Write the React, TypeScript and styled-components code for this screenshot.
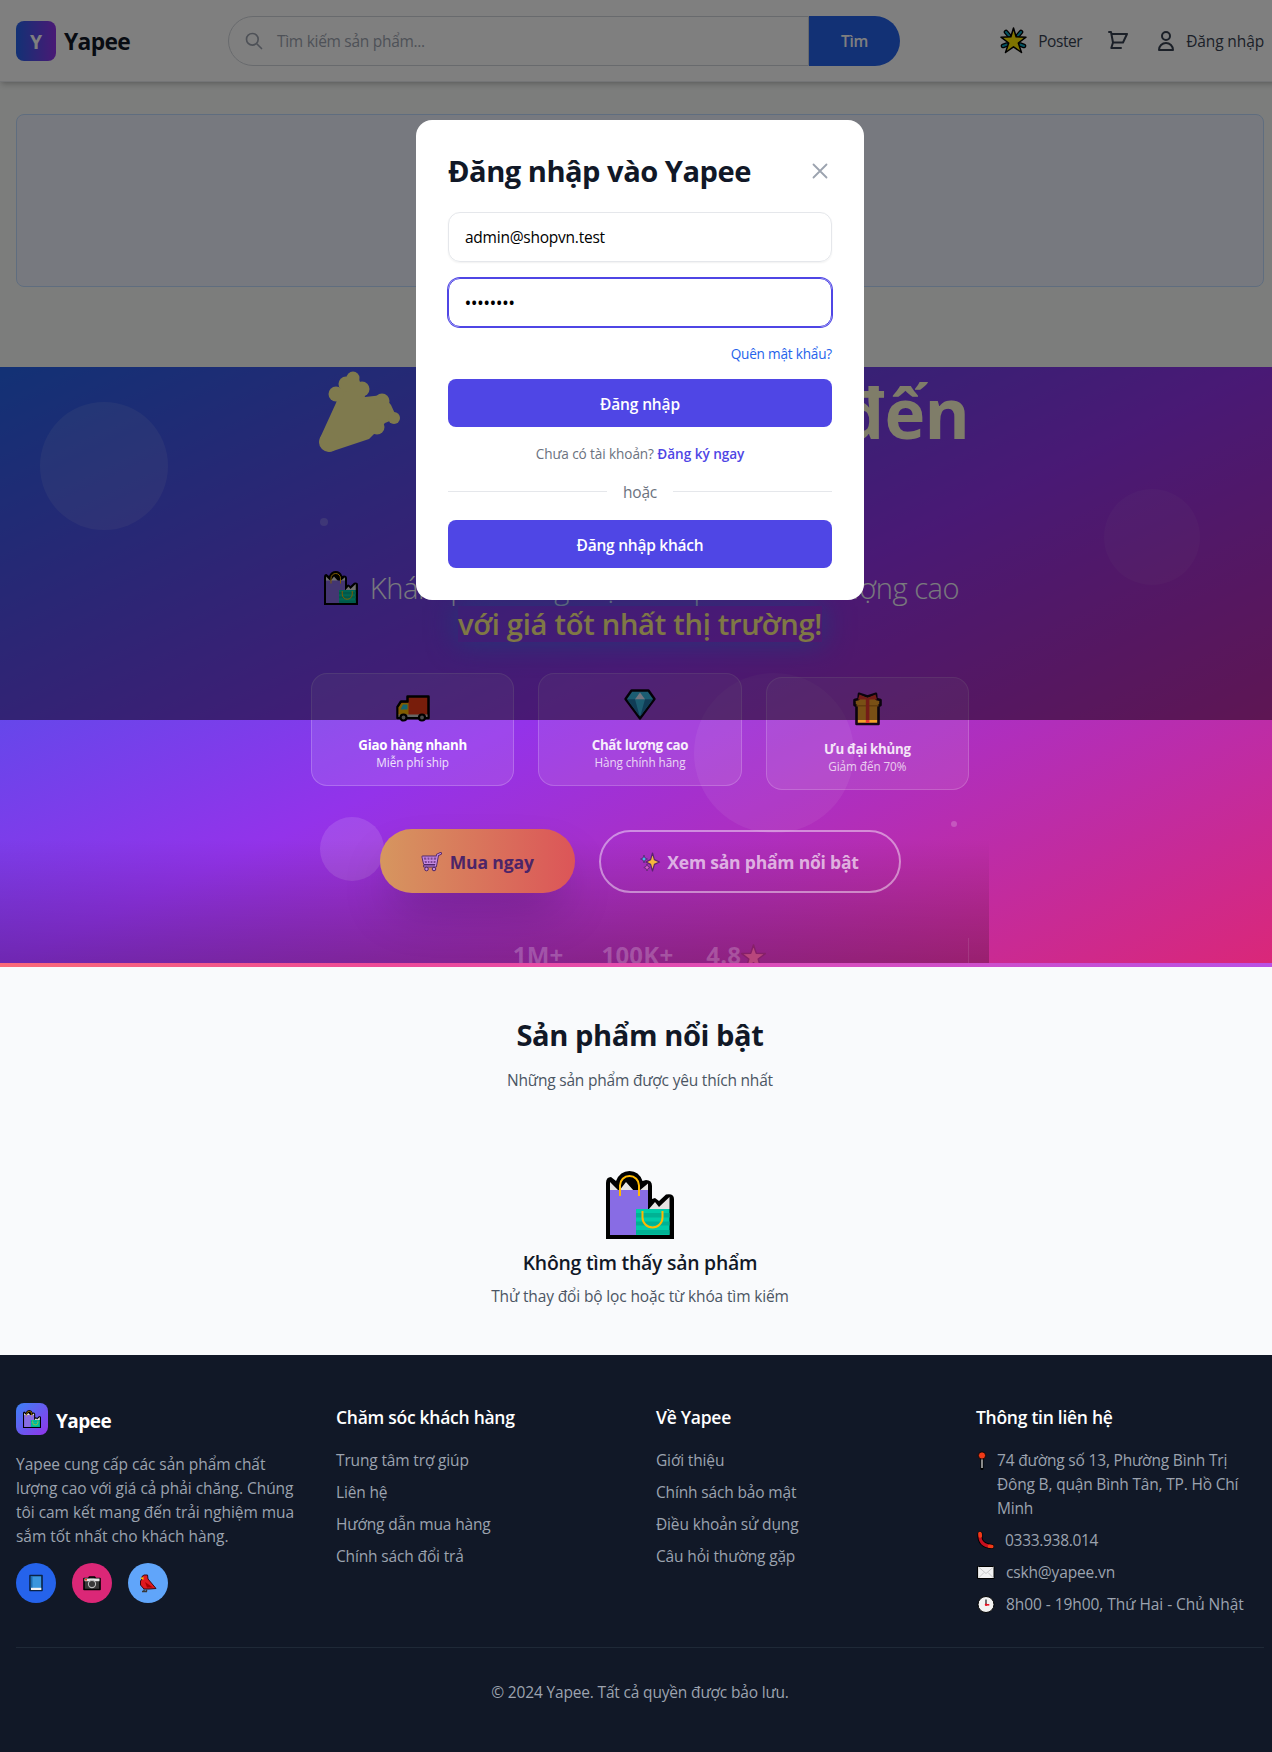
import React from "react";
import styled, { createGlobalStyle, css } from "styled-components";

const GlobalStyle = createGlobalStyle`
  *, *::before, *::after { box-sizing: border-box; }
  body { margin: 0; background: #111827; font-family: "Open Sans", "Noto Sans", sans-serif; overflow: hidden; }
  h1, h2, h3, h4, p, ul { margin: 0; padding: 0; }
  ul { list-style: none; }
  svg { display: block; flex: none; overflow: visible; }
  button { border: 0; padding: 0; background: none; font-family: inherit; cursor: pointer; }
  a { color: inherit; text-decoration: none; }
`;

const type = (size: number, line: number, weight = 400, spacing = 0) => css`
  font-size: ${size}px;
  line-height: ${line}px;
  font-weight: ${weight};
  letter-spacing: ${spacing}px;
  white-space: nowrap;
`;

const Viewport = styled.div`
  position: relative;
  height: 1752px;
  overflow: hidden;
`;
const Page = styled.div`
  position: relative;
  width: 1280px;
  background: #f9fafc;
`;

/* ---------- header ---------- */
const Header = styled.header`
  position: relative;
  z-index: 1;
  display: flex;
  align-items: center;
  height: 82px;
  padding: 0 16px;
  background: #fff;
  border-bottom: 1px solid #e9ebef;
  box-shadow: 0 4px 6px -1px rgba(0, 0, 0, 0.16), 0 2px 4px -2px rgba(0, 0, 0, 0.14);
`;
const Brand = styled.a`
  display: flex;
  align-items: center;
  gap: 8px;
  width: 212px;
`;
const BrandMark = styled.span`
  display: grid;
  place-items: center;
  width: 40px;
  height: 40px;
  padding-top: 2px;
  border-radius: 8px;
  color: #fff;
  background: linear-gradient(to right, #2563eb, #9333ea);
  ${type(19.4, 38, 700)}
`;
const BrandName = styled.span`
  padding-top: 2px;
  color: #111827;
  ${type(22.8, 32, 700, -0.67)}
`;
const Search = styled.form`
  display: flex;
  width: 672px;
  height: 50px;
`;
const SearchField = styled.div`
  display: flex;
  align-items: center;
  gap: 13px;
  flex: 1;
  padding-left: 15px;
  border: 1px solid #d1d5db;
  border-radius: 25px 0 0 25px;
  color: #9ca3af;
  ${type(15.5, 24, 400, -0.29)}
`;
const SearchButton = styled.button`
  width: 91px;
  border-radius: 0 25px 25px 0;
  background: #2563eb;
  color: #fff;
  ${type(15.5, 24, 600, -0.25)}
`;
const HeaderNav = styled.nav`
  display: flex;
  align-items: center;
  justify-content: flex-end;
  gap: 24px;
  flex: 1;
  color: #374151;
`;
const NavItem = styled.a<{ $spacing?: number; $gap?: number }>`
  display: flex;
  align-items: center;
  gap: ${p => p.$gap ?? 8}px;
  ${p => type(15.5, 24, 400, p.$spacing ?? -0.12)}
`;

/* ---------- notice ---------- */
const NoticeArea = styled.div`
  padding: 32px 16px 80px;
  background: #f9fbf9;
`;
const Notice = styled.div`
  height: 173px;
  border: 1px solid #bfdbfe;
  border-radius: 8px;
  background: #eff3fe;
`;

/* ---------- hero ---------- */
const Hero = styled.section`
  position: relative;
  height: 600px;
  overflow: hidden;
  color: #fff;
  background: linear-gradient(to bottom right, #2563eb, #9333ea, #db2777);
`;
const Bubble = styled.span<{ $x: number; $y: number; $size: number; $alpha: number }>`
  position: absolute;
  left: ${p => p.$x}px;
  top: ${p => p.$y}px;
  width: ${p => p.$size}px;
  height: ${p => p.$size}px;
  border-radius: 50%;
  background: rgba(255, 255, 255, ${p => p.$alpha});
`;
const HeroFade = styled.div`
  position: absolute;
  left: 0;
  bottom: 0;
  width: 989px;
  height: 128px;
  background: linear-gradient(to top, rgba(0, 0, 0, 0.25), transparent);
`;
const HeroBar = styled.div`
  position: absolute;
  left: 0;
  right: 0;
  bottom: 0;
  height: 4px;
  background: linear-gradient(to right, #fb6a78, #ee4a98 30%, #e04db4 55%, #b951e6);
`;
const HeroContent = styled.div`
  position: relative;
  display: flex;
  flex-direction: column;
  align-items: center;
  width: 658px;
  margin: 0 auto;
`;
const HeroTitle = styled.h1`
  display: flex;
  justify-content: space-between;
  width: 658px;
  height: 203px;
  padding-left: 8px;
  color: #fffbd2;
  ${type(69, 90, 700, -0.8)}
`;
const TitleIcon = styled.span`
  padding-top: 4px;
`;
const HeroLead = styled.p`
  display: flex;
  align-items: center;
  gap: 12px;
  padding-left: 3px;
  color: #f2f4fb;
  ${type(29.1, 36, 300, -0.46)}
`;
const HeroOffer = styled.p`
  color: #fef08a;
  box-shadow: 0 0 30px rgba(59, 130, 246, 0.5), 0 0 24px rgba(40, 120, 246, 0.3);
  ${type(29.1, 36, 600, -0.27)}
`;
const Perks = styled.div`
  display: grid;
  grid-template-columns: repeat(3, 1fr);
  gap: 24px;
  width: 100%;
  margin-top: 31px;
`;
const Perk = styled.div<{ $shift?: number; $fade?: number }>`
  display: flex;
  flex-direction: column;
  align-items: center;
  height: 113px;
  padding-top: 16px;
  border: 1px solid rgba(255, 255, 255, 0.2);
  border-radius: 16px;
  background: rgba(255, 255, 255, 0.1);
  opacity: ${p => p.$fade ?? 1};
  transform: translateY(${p => p.$shift ?? 0}px);
`;
const PerkIcon = styled.div<{ $lift?: number }>`
  display: grid;
  place-items: center;
  height: 36px;
  margin-bottom: 9px;
  transform: translateY(${p => p.$lift ?? 0}px);
`;
const PerkTitle = styled.h3`
  ${type(13.3, 20, 700, -0.28)}
`;
const PerkText = styled.p`
  opacity: 0.85;
  ${type(11.7, 14, 400, -0.06)}
`;
const HeroActions = styled.div`
  display: flex;
  align-items: center;
  gap: 23.5px;
  margin-top: 43px;
`;
const BuyButton = styled.button`
  display: flex;
  align-items: center;
  justify-content: center;
  gap: 8px;
  width: 195.5px;
  height: 64px;
  padding-top: 1px;
  border-radius: 32px;
  color: #4c2468;
  background: linear-gradient(to right, #d6965f, #dc5558);
  box-shadow: 0 25px 50px -12px rgba(0, 0, 0, 0.25);
  ${type(17.5, 28, 700, -0.1)}
`;
const FeaturedButton = styled.button`
  display: flex;
  align-items: center;
  justify-content: center;
  gap: 7px;
  width: 302px;
  height: 63px;
  padding-top: 1px;
  border: 2px solid rgba(255, 255, 255, 0.45);
  border-radius: 32px;
  color: rgba(255, 255, 255, 0.65);
  ${type(17.5, 28, 700, -0.2)}
`;
const Stats = styled.div`
  display: flex;
  justify-content: center;
  width: 100%;
  height: 60px;
  margin-top: 45px;
  border-right: 1px solid rgba(255, 255, 255, 0.1);
  color: rgba(255, 255, 255, 0.22);
`;
const Stat = styled.span<{ $gap: number }>`
  display: flex;
  align-items: flex-start;
  margin-right: ${p => p.$gap}px;
  padding-top: 1px;
  ${type(24, 32, 700, 0.2)}
`;
const StatStar = styled.span`
  padding-top: 5px;
`;

/* ---------- products ---------- */
const Products = styled.section`
  display: flex;
  flex-direction: column;
  align-items: center;
  height: 388px;
  padding-top: 49px;
`;
const SectionTitle = styled.h2`
  padding-top: 1px;
  color: #111827;
  ${type(29.1, 36, 700, -0.42)}
`;
const SectionText = styled.p`
  margin-top: 15px;
  color: #4b5563;
  ${type(15.5, 24, 400, -0.2)}
`;
const Empty = styled.div`
  display: flex;
  flex-direction: column;
  align-items: center;
  padding-top: 79px;
`;
const EmptyTitle = styled.h3`
  margin-top: 10px;
  color: #111827;
  ${type(19.4, 28, 600, -0.24)}
`;
const EmptyText = styled.p`
  margin-top: 7px;
  color: #4b5563;
  ${type(15.5, 24, 400, -0.14)}
`;

/* ---------- footer ---------- */
const Footer = styled.footer`
  padding: 48px 16px;
  background: #111827;
  color: #9ca3af;
`;
const FooterGrid = styled.div`
  display: grid;
  grid-template-columns: repeat(4, 288px);
  gap: 32px;
`;
const FooterBrand = styled.div`
  display: flex;
  align-items: center;
  gap: 8px;
  margin-bottom: 17px;
`;
const FooterMark = styled.span`
  display: grid;
  place-items: center;
  width: 32px;
  height: 32px;
  border-radius: 8px;
  background: linear-gradient(to bottom right, #3b82f6, #9333ea);
`;
const FooterName = styled.span`
  padding-top: 4px;
  color: #fff;
  ${type(19, 28, 700, -0.55)}
`;
const FooterText = styled.p`
  ${type(15.5, 24, 400, -0.04)}
`;
const Socials = styled.div`
  display: flex;
  gap: 16px;
  margin-top: 15px;
`;
const Social = styled.a<{ $color: string }>`
  display: grid;
  place-items: center;
  width: 40px;
  height: 40px;
  border-radius: 50%;
  background: ${p => p.$color};
`;
const FooterTitle = styled.h4`
  margin-bottom: 17px;
  color: #fff;
  ${type(17.5, 28, 600, -0.27)}
`;
const FooterList = styled.ul`
  display: grid;
  gap: 8px;
  margin-bottom: -1px;
`;
const FooterItem = styled.li<{ $spacing?: number; $gap?: number }>`
  display: flex;
  gap: ${p => p.$gap ?? 0}px;
  ${p => type(15.5, 24, 400, p.$spacing ?? -0.15)}
`;
const ItemIcon = styled.span`
  display: flex;
  align-items: center;
  height: 24px;
`;
const Copyright = styled.p`
  margin-top: 32px;
  padding-top: 32px;
  padding-bottom: 20px;
  border-top: 1px solid #1f2937;
  text-align: center;
  ${type(15.5, 24, 400, -0.17)}
`;

/* ---------- login dialog ---------- */
const Backdrop = styled.div`
  position: absolute;
  inset: 0 0 auto 0;
  z-index: 2;
  display: flex;
  align-items: center;
  justify-content: center;
  height: 720px;
  background: rgba(0, 0, 0, 0.5);
`;
const Dialog = styled.div`
  display: flex;
  flex-direction: column;
  width: 448px;
  height: 480px;
  padding: 32px;
  border-radius: 16px;
  background: #fff;
`;
const DialogHead = styled.div`
  display: flex;
  align-items: center;
  justify-content: space-between;
  height: 36px;
  margin-bottom: 24px;
`;
const DialogTitle = styled.h2`
  padding-top: 2px;
  color: #111827;
  ${type(29.1, 36, 700, -0.49)}
`;
const CloseButton = styled.button`
  padding-top: 1px;
  color: #9ca3af;
`;
const Field = styled.div<{ $focused?: boolean }>`
  display: flex;
  align-items: center;
  height: 49.5px;
  margin-bottom: 16px;
  padding: ${p => (p.$focused ? 2 : 0)}px 16px 0;
  border: 1px solid ${p => (p.$focused ? "#4f46e5" : "#e5e7eb")};
  border-radius: 12px;
  box-shadow: ${p => (p.$focused ? "0 0 0 1px #4f46e5" : "0 1px 2px rgba(0, 0, 0, 0.06)")};
  color: #000;
  ${p => (p.$focused ? type(15.5, 24, 600, 0.42) : type(15.5, 24, 400, -0.24))}
`;
const Forgot = styled.a`
  align-self: flex-end;
  margin: 1px 0 15px;
  color: #2563eb;
  ${type(13.6, 20, 400, -0.2)}
`;
const Submit = styled.button<{ $spacing: number; $drop?: number }>`
  height: 48px;
  padding-top: ${p => p.$drop ?? 1}px;
  border-radius: 8px;
  background: #4f46e5;
  color: #fff;
  ${p => type(15.5, 24, 600, p.$spacing)}
`;
const Register = styled.p`
  margin: 17px 0 16px;
  color: #6b7280;
  text-align: center;
  ${type(13.6, 20, 400, -0.1)}
`;
const RegisterLink = styled.a`
  color: #4f46e5;
  font-weight: 600;
  letter-spacing: -0.04px;
`;
const Divider = styled.div`
  display: flex;
  align-items: center;
  gap: 16px;
  margin-bottom: 16px;
  color: #6b7280;
  ${type(15.5, 24, 400, -0.2)}

  &::before, &::after {
    content: "";
    flex: 1;
    height: 1px;
    margin-bottom: 1px;
    background: #e5e7eb;
  }
`;

/* ---------- drawings ---------- */
const outline = { stroke: "#000", strokeLinejoin: "round" as const, strokeLinecap: "round" as const };

const BagsIcon = ({ size }: { size: number }) => (
  <svg width={size} height={size} viewBox="0 0 68 68">
    <path d="M0 68V12Q0 6 5 6L10 10Q14 0 23.500 0Q33 0 36.500 10L40 9Q46 9 46 15V28L49 27L53 30L60 23.500Q68 22 68 28V68Z" fill="#000" />
    <path d="M4 20V11L13 20L20 11L28 20ZM33 20L42 12.500V20Z" fill="#e5e3e3" />
    <path d="M4 19H42V38H30V64H4Z" fill="#886ce4" />
    <path d="M43 38L49 31L53 36L63.500 26V38Z" fill="#e5e3e3" />
    <path d="M30 38H63.500V64H30Z" fill="#00cca8" />
    <path d="M30 42.500H63.500V47H30ZM30 51H63.500V55H30ZM30 59.500H63.500V64H30Z" fill="#00b294" transform="translate(0 -.5)" />
    <path d="M14 25V14.500a9.500 9.500 0 0 1 19 0V25M36.500 40V46.500a9.800 9.800 0 0 0 20 0V40" fill="none" stroke="#ffb900" strokeWidth="2" />
  </svg>
);

const StarIcon = () => (
  <svg width="27" height="27" viewBox="0 0 27 27">
    <path d="M6 5L9 8.500M21 5L18 8.500M3 19L7 17.500M24 19L20 17.500" {...outline} strokeWidth="4.600" />
    <path d="M6 5L9 8.500M21 5L18 8.500M3 19L7 17.500M24 19L20 17.500" stroke="#0aa6c4" strokeWidth="2" strokeLinecap="round" />
    <path d="M13.500 1L16.100 9.800L26 10.200L18.300 16L21.500 25.500L13.500 19.800L5.500 25.500L8.700 16L1 10.200L10.900 9.800Z" fill="#ffe800" {...outline} strokeWidth="1.500" />
  </svg>
);

const SearchIcon = () => (
  <svg width="20" height="20" viewBox="0 0 24 24" fill="none" stroke="currentColor" strokeWidth="2" strokeLinecap="round">
    <path d="M21 21l-6-6m2-5a7 7 0 11-14 0 7 7 0 0114 0z" />
  </svg>
);

const CartIcon = () => (
  <svg width="24" height="24" viewBox="0 0 24 24" fill="none" stroke="currentColor" strokeWidth="2" strokeLinecap="round" strokeLinejoin="round">
    <path d="M3 3h2l.4 2M7 13.500h10L21 5H5.400m0 0L7 13.500m0 0L5.300 19H15" />
  </svg>
);

const UserIcon = () => (
  <svg width="24" height="24" viewBox="0 0 24 24" fill="none" stroke="currentColor" strokeWidth="2" strokeLinecap="round" strokeLinejoin="round">
    <path d="M16 7a4 4 0 11-8 0 4 4 0 018 0zM12 14a7 7 0 00-7 7h14a7 7 0 00-7-7z" />
  </svg>
);

const CloseIcon = () => (
  <svg width="24" height="24" viewBox="0 0 24 24" fill="none" stroke="currentColor" strokeWidth="1.800" strokeLinecap="round">
    <path d="M5.500 5.500l13 13M18.500 5.500l-13 13" />
  </svg>
);

const PartyIcon = () => (
  <svg width="81" height="81" viewBox="0 0 81 81" fill="#fef49c">
    <path d="M1 67L17 32L24 12L40 8L46 26L64 24L72 34L78 47L66 52L56 62L50 68L14 80Q9 82 4 78Q-1 73 1 67Z" />
    <circle cx="10" cy="71" r="10" />
    <circle cx="34" cy="7" r="6.500" />
    <circle cx="27" cy="13" r="7.500" />
    <circle cx="17" cy="23" r="7.500" />
    <circle cx="43" cy="18" r="7.500" />
    <circle cx="63" cy="30" r="7.500" />
    <circle cx="75" cy="47" r="6" />
    <circle cx="58" cy="56" r="7.500" />
  </svg>
);

const TruckIcon = () => (
  <svg width="34" height="27" viewBox="0 0 34 27">
    <path d="M1.500 23V12L5 6.500H11.500V1.500H32.500V23Z" fill="#f03a17" {...outline} strokeWidth="2.500" />
    <path d="M2.500 20V12.500L5.500 8H12.500V20Z" fill="#ffb900" />
    <path d="M4.500 14.500L7 9.500H11.500V14.500Z" fill="#26c6dc" />
    <path d="M2.500 19.500H31.500V22H2.500Z" fill="#ccc" />
    <circle cx="7.500" cy="22.500" r="3" fill="#999" {...outline} strokeWidth="2.200" />
    <circle cx="26" cy="22.500" r="3" fill="#999" {...outline} strokeWidth="2.200" />
  </svg>
);

const DiamondIcon = () => (
  <svg width="32" height="31" viewBox="0 0 32 31">
    <path d="M7.500 1.500H24.500L30.500 10L16 29.500L1.500 10Z" fill="#2fc4e4" {...outline} strokeWidth="2.400" />
    <path d="M3 10.200H11L15.800 27.500Z" fill="#1680a8" />
    <path d="M29 10.200H21L16.200 27.500Z" fill="#1680a8" />
    <path d="M11 10.200L16 3.500L21 10.200Z" fill="#f2fbff" />
  </svg>
);

const GiftIcon = () => (
  <svg width="29" height="34" viewBox="0 0 29 34">
    <path d="M5.500 7L6 1.800L14.500 4.500L23 1.800L23.500 7L27.500 8V13L25.500 14V32H3.500V14L1.500 13V8Z" fill="#ffb213" {...outline} strokeWidth="2.600" />
    <path d="M5 7.500L6.500 2.500L14.500 6L22.500 2.500L24 7.500Z" fill="#f03a17" />
    <path d="M3.500 13H25.500V14.500H3.500Z" fill="#c98500" />
    <path d="M12.800 7H16.400V31H12.800Z" fill="#f03a17" />
  </svg>
);

const TrolleyIcon = () => (
  <svg width="21" height="20" viewBox="0 0 21 20" fill="none">
    <path d="M19.500 1.500L16.500 3L14.500 14H3.500M2 5H16L14.800 11.500H3.500Z" {...outline} stroke="#4c2468" strokeWidth="3" />
    <path d="M2 5H16L14.800 11.500H3.500Z" fill="#7d4796" />
    <path d="M19.500 1.500L16.500 3L14.500 14H3.500M2 5H16L14.800 11.500H3.500ZM5.800 5.500L6.500 11M9 5.500V11M12.200 5.500L12 11M3 8.300H15" stroke="#c58be0" strokeWidth="1.200" strokeLinecap="round" />
    <circle cx="5.500" cy="17" r="1.800" fill="#c58be0" stroke="#4c2468" />
    <circle cx="13" cy="17" r="1.800" fill="#c58be0" stroke="#4c2468" />
  </svg>
);

const SparklesIcon = () => (
  <svg width="20" height="20" viewBox="0 0 20 20" strokeLinejoin="round">
    <path d="M12.500 1L14.400 7.600L19.500 10L14.400 12.400L12.500 19L10.600 12.400L6 10L10.600 7.600Z" fill="#f5b83d" stroke="#5c2370" strokeWidth="1.200" />
    <path d="M4 3L5 6L7.500 7L5 8L4 11L3 8L.5 7L3 6Z" fill="#48b6ea" stroke="#5c2370" strokeWidth=".8" />
    <path d="M7 12L8 14.500L10.200 15.500L8 16.500L7 19L6 16.500L3.800 15.500L6 14.500Z" fill="#d95fc8" stroke="#5c2370" strokeWidth=".8" />
  </svg>
);

const RatingIcon = () => (
  <svg width="25" height="25" viewBox="0 0 25 25">
    <path d="M12.500 1L15.300 9.300L24.300 9.600L17.200 15L19.800 24L12.500 18.800L5.200 24L7.800 15L.7 9.600L9.700 9.300Z" fill="#b8467c" stroke="#862069" strokeWidth="1.500" strokeLinejoin="round" />
  </svg>
);

const BookIcon = () => (
  <svg width="16" height="18" viewBox="0 0 16 18">
    <path d="M2 1.500H14V16.500H2Z" fill="#3a96dd" {...outline} stroke="#0b2344" strokeWidth="1.600" />
    <path d="M2.800 2H4.500V14H2.800Z" fill="#1d6fb5" />
    <path d="M3 13.800H13.300V16H3Z" fill="#f2f2f2" />
  </svg>
);

const CameraIcon = () => (
  <svg width="18" height="15" viewBox="0 0 18 15">
    <path d="M1 2.500H5.500L6.500 1H11.500L12.500 2.500H17V13.500H1Z" fill="#383838" {...outline} strokeWidth="1.600" />
    <path d="M1.500 2.500H16.500V5.200H1.500Z" fill="#e5e5e5" />
    <circle cx="9" cy="8" r="3.600" fill="#383838" stroke="#bbb" strokeWidth="1.100" />
    <path d="M2 3h2v1.500H2z" fill="#f03a17" />
  </svg>
);

const BirdIcon = () => (
  <svg width="18" height="18" viewBox="0 0 18 18">
    <path d="M3 2.500L5 1H8.500L9 5L17 14.500L10 15H5L1.500 11V7L3 5Z" fill="#e0191f" stroke="#3b0a12" strokeWidth="1" strokeLinejoin="round" />
    <path d="M6 8L14 13.500H8Z" fill="#a80000" />
    <path d="M1 4L4.500 3V6Z" fill="#ffb900" />
    <path d="M5 15.500V17.500M3 17.500H8M7.500 15.500V17.500" stroke="#383838" strokeWidth="1.500" />
  </svg>
);

const PinIcon = () => (
  <svg width="12" height="19" viewBox="0 0 12 19">
    <path d="M6 6V17.500" stroke="#000" strokeWidth="3" strokeLinecap="round" />
    <path d="M6 6V17" stroke="#e8e8e8" strokeWidth="1.200" />
    <circle cx="6" cy="4.500" r="3.600" fill="#f03a17" stroke="#000" strokeWidth=".8" />
  </svg>
);

const PhoneIcon = () => (
  <svg width="19" height="19" viewBox="0 0 19 19">
    <path d="M4 3Q3.500 9 6.500 12T15.500 15.500" fill="none" {...outline} strokeWidth="5" />
    <path d="M4 3Q3.500 9 6.500 12T15.500 15.500" fill="none" stroke="#c50f1f" strokeWidth="3.200" strokeLinecap="round" />
    <path d="M4 2.500L4.300 5M13.500 15.200L15.800 15.500" stroke="#f03a17" strokeWidth="3.600" strokeLinecap="round" />
  </svg>
);

const MailIcon = () => (
  <svg width="20" height="15" viewBox="0 0 20 15">
    <path d="M2 1.500H18V13.500H2Z" fill="#f2f2f2" {...outline} strokeWidth="1" />
    <path d="M2.500 2L10 8.500L17.500 2M2.500 13L8 7.500M17.500 13L12 7.500" fill="none" stroke="#c4c4c4" strokeWidth=".9" />
  </svg>
);

const ClockIcon = () => (
  <svg width="20" height="19" viewBox="0 0 20 19">
    <circle cx="10" cy="9.500" r="8" fill="#f2f2f2" stroke="#000" strokeWidth="1" />
    <path d="M10 4.500V9.500" stroke="#383838" strokeWidth="1.400" />
    <path d="M10 9.800H13.300" stroke="#e81123" strokeWidth="1.600" />
    <circle cx="10" cy="9.800" r="1.200" fill="#e81123" />
  </svg>
);

/* ---------- data ---------- */
const support = ["Trung tâm trợ giúp", "Liên hệ", "Hướng dẫn mua hàng", "Chính sách đổi trả"];
const about = ["Giới thiệu", "Chính sách bảo mật", "Điều khoản sử dụng", "Câu hỏi thường gặp"];

export default function App() {
  return (
    <Viewport>
      <GlobalStyle />
      <Page>
        <Header>
          <Brand href="#">
            <BrandMark>Y</BrandMark>
            <BrandName>Yapee</BrandName>
          </Brand>
          <Search>
            <SearchField>
              <SearchIcon />
              Tìm kiếm sản phẩm...
            </SearchField>
            <SearchButton type="button">Tìm</SearchButton>
          </Search>
          <HeaderNav>
            <NavItem href="#" $spacing={-0.45} $gap={11}>
              <StarIcon />
              Poster
            </NavItem>
            <NavItem href="#">
              <CartIcon />
            </NavItem>
            <NavItem href="#">
              <UserIcon />
              Đăng nhập
            </NavItem>
          </HeaderNav>
        </Header>

        <NoticeArea>
          <Notice />
        </NoticeArea>

        <Hero>
          <Bubble $x={40} $y={34.5} $size={128} $alpha={0.1} />
          <Bubble $x={1104} $y={122} $size={96} $alpha={0.05} />
          <Bubble $x={694} $y={306} $size={160} $alpha={0.06} />
          <Bubble $x={320} $y={450} $size={64} $alpha={0.12} />
          <Bubble $x={320} $y={150.5} $size={8} $alpha={0.2} />
          <Bubble $x={950.5} $y={453.5} $size={6} $alpha={0.2} />
          <HeroFade />
          <HeroContent>
            <HeroTitle>
              <TitleIcon>
                <PartyIcon />
              </TitleIcon>
              Chào mừng đến
            </HeroTitle>
            <HeroLead>
              <BagsIcon size={34} />
              Khám phá hàng triệu sản phẩm chất lượng cao
            </HeroLead>
            <HeroOffer>với giá tốt nhất thị trường!</HeroOffer>
            <Perks>
              <Perk>
                <PerkIcon>
                  <TruckIcon />
                </PerkIcon>
                <PerkTitle>Giao hàng nhanh</PerkTitle>
                <PerkText>Miễn phí ship</PerkText>
              </Perk>
              <Perk $fade={0.92}>
                <PerkIcon $lift={-4}>
                  <DiamondIcon />
                </PerkIcon>
                <PerkTitle>Chất lượng cao</PerkTitle>
                <PerkText>Hàng chính hãng</PerkText>
              </Perk>
              <Perk $shift={4} $fade={0.87}>
                <PerkIcon $lift={-3}>
                  <GiftIcon />
                </PerkIcon>
                <PerkTitle>Ưu đại khủng</PerkTitle>
                <PerkText>Giảm đến 70%</PerkText>
              </Perk>
            </Perks>
            <HeroActions>
              <BuyButton>
                <TrolleyIcon />
                Mua ngay
              </BuyButton>
              <FeaturedButton>
                <SparklesIcon />
                Xem sản phẩm nổi bật
              </FeaturedButton>
            </HeroActions>
            <Stats>
              <Stat $gap={38}>1M+</Stat>
              <Stat $gap={33}>100K+</Stat>
              <Stat $gap={0}>
                4.8
                <StatStar>
                  <RatingIcon />
                </StatStar>
              </Stat>
            </Stats>
          </HeroContent>
          <HeroBar />
        </Hero>

        <Products>
          <SectionTitle>Sản phẩm nổi bật</SectionTitle>
          <SectionText>Những sản phẩm được yêu thích nhất</SectionText>
          <Empty>
            <BagsIcon size={68} />
            <EmptyTitle>Không tìm thấy sản phẩm</EmptyTitle>
            <EmptyText>Thử thay đổi bộ lọc hoặc từ khóa tìm kiếm</EmptyText>
          </Empty>
        </Products>

        <Footer>
          <FooterGrid>
            <div>
              <FooterBrand>
                <FooterMark>
                  <BagsIcon size={18} />
                </FooterMark>
                <FooterName>Yapee</FooterName>
              </FooterBrand>
              <FooterText>
                Yapee cung cấp các sản phẩm chất
                <br />
                lượng cao với giá cả phải chăng. Chúng
                <br />
                tôi cam kết mang đến trải nghiệm mua
                <br />
                sắm tốt nhất cho khách hàng.
              </FooterText>
              <Socials>
                <Social $color="#2563eb" href="#">
                  <BookIcon />
                </Social>
                <Social $color="#db2777" href="#">
                  <CameraIcon />
                </Social>
                <Social $color="#60a5fa" href="#">
                  <BirdIcon />
                </Social>
              </Socials>
            </div>
            <div>
              <FooterTitle>Chăm sóc khách hàng</FooterTitle>
              <FooterList>
                {support.map(item => (
                  <FooterItem key={item}>{item}</FooterItem>
                ))}
              </FooterList>
            </div>
            <div>
              <FooterTitle>Về Yapee</FooterTitle>
              <FooterList>
                {about.map(item => (
                  <FooterItem key={item}>{item}</FooterItem>
                ))}
              </FooterList>
            </div>
            <div>
              <FooterTitle>Thông tin liên hệ</FooterTitle>
              <FooterList>
                <FooterItem $gap={9} $spacing={-0.18}>
                  <ItemIcon>
                    <PinIcon />
                  </ItemIcon>
                  <span>
                    74 đường số 13, Phường Bình Trị
                    <br />
                    Đông B, quận Bình Tân, TP. Hồ Chí
                    <br />
                    Minh
                  </span>
                </FooterItem>
                <FooterItem $gap={10} $spacing={-0.3}>
                  <ItemIcon>
                    <PhoneIcon />
                  </ItemIcon>
                  0333.938.014
                </FooterItem>
                <FooterItem $gap={10}>
                  <ItemIcon>
                    <MailIcon />
                  </ItemIcon>
                  cskh@yapee.vn
                </FooterItem>
                <FooterItem $gap={10} $spacing={-0.06}>
                  <ItemIcon>
                    <ClockIcon />
                  </ItemIcon>
                  8h00 - 19h00, Thứ Hai - Chủ Nhật
                </FooterItem>
              </FooterList>
            </div>
          </FooterGrid>
          <Copyright>© 2024 Yapee. Tất cả quyền được bảo lưu.</Copyright>
        </Footer>

        <Backdrop>
          <Dialog role="dialog">
            <DialogHead>
              <DialogTitle>Đăng nhập vào Yapee</DialogTitle>
              <CloseButton aria-label="Đóng">
                <CloseIcon />
              </CloseButton>
            </DialogHead>
            <Field>admin@shopvn.test</Field>
            <Field $focused>••••••••</Field>
            <Forgot href="#">Quên mật khẩu?</Forgot>
            <Submit $spacing={-0.14} $drop={2}>
              Đăng nhập
            </Submit>
            <Register>
              Chưa có tài khoản? <RegisterLink href="#">Đăng ký ngay</RegisterLink>
            </Register>
            <Divider>hoặc</Divider>
            <Submit $spacing={-0.24}>Đăng nhập khách</Submit>
          </Dialog>
        </Backdrop>
      </Page>
    </Viewport>
  );
}
